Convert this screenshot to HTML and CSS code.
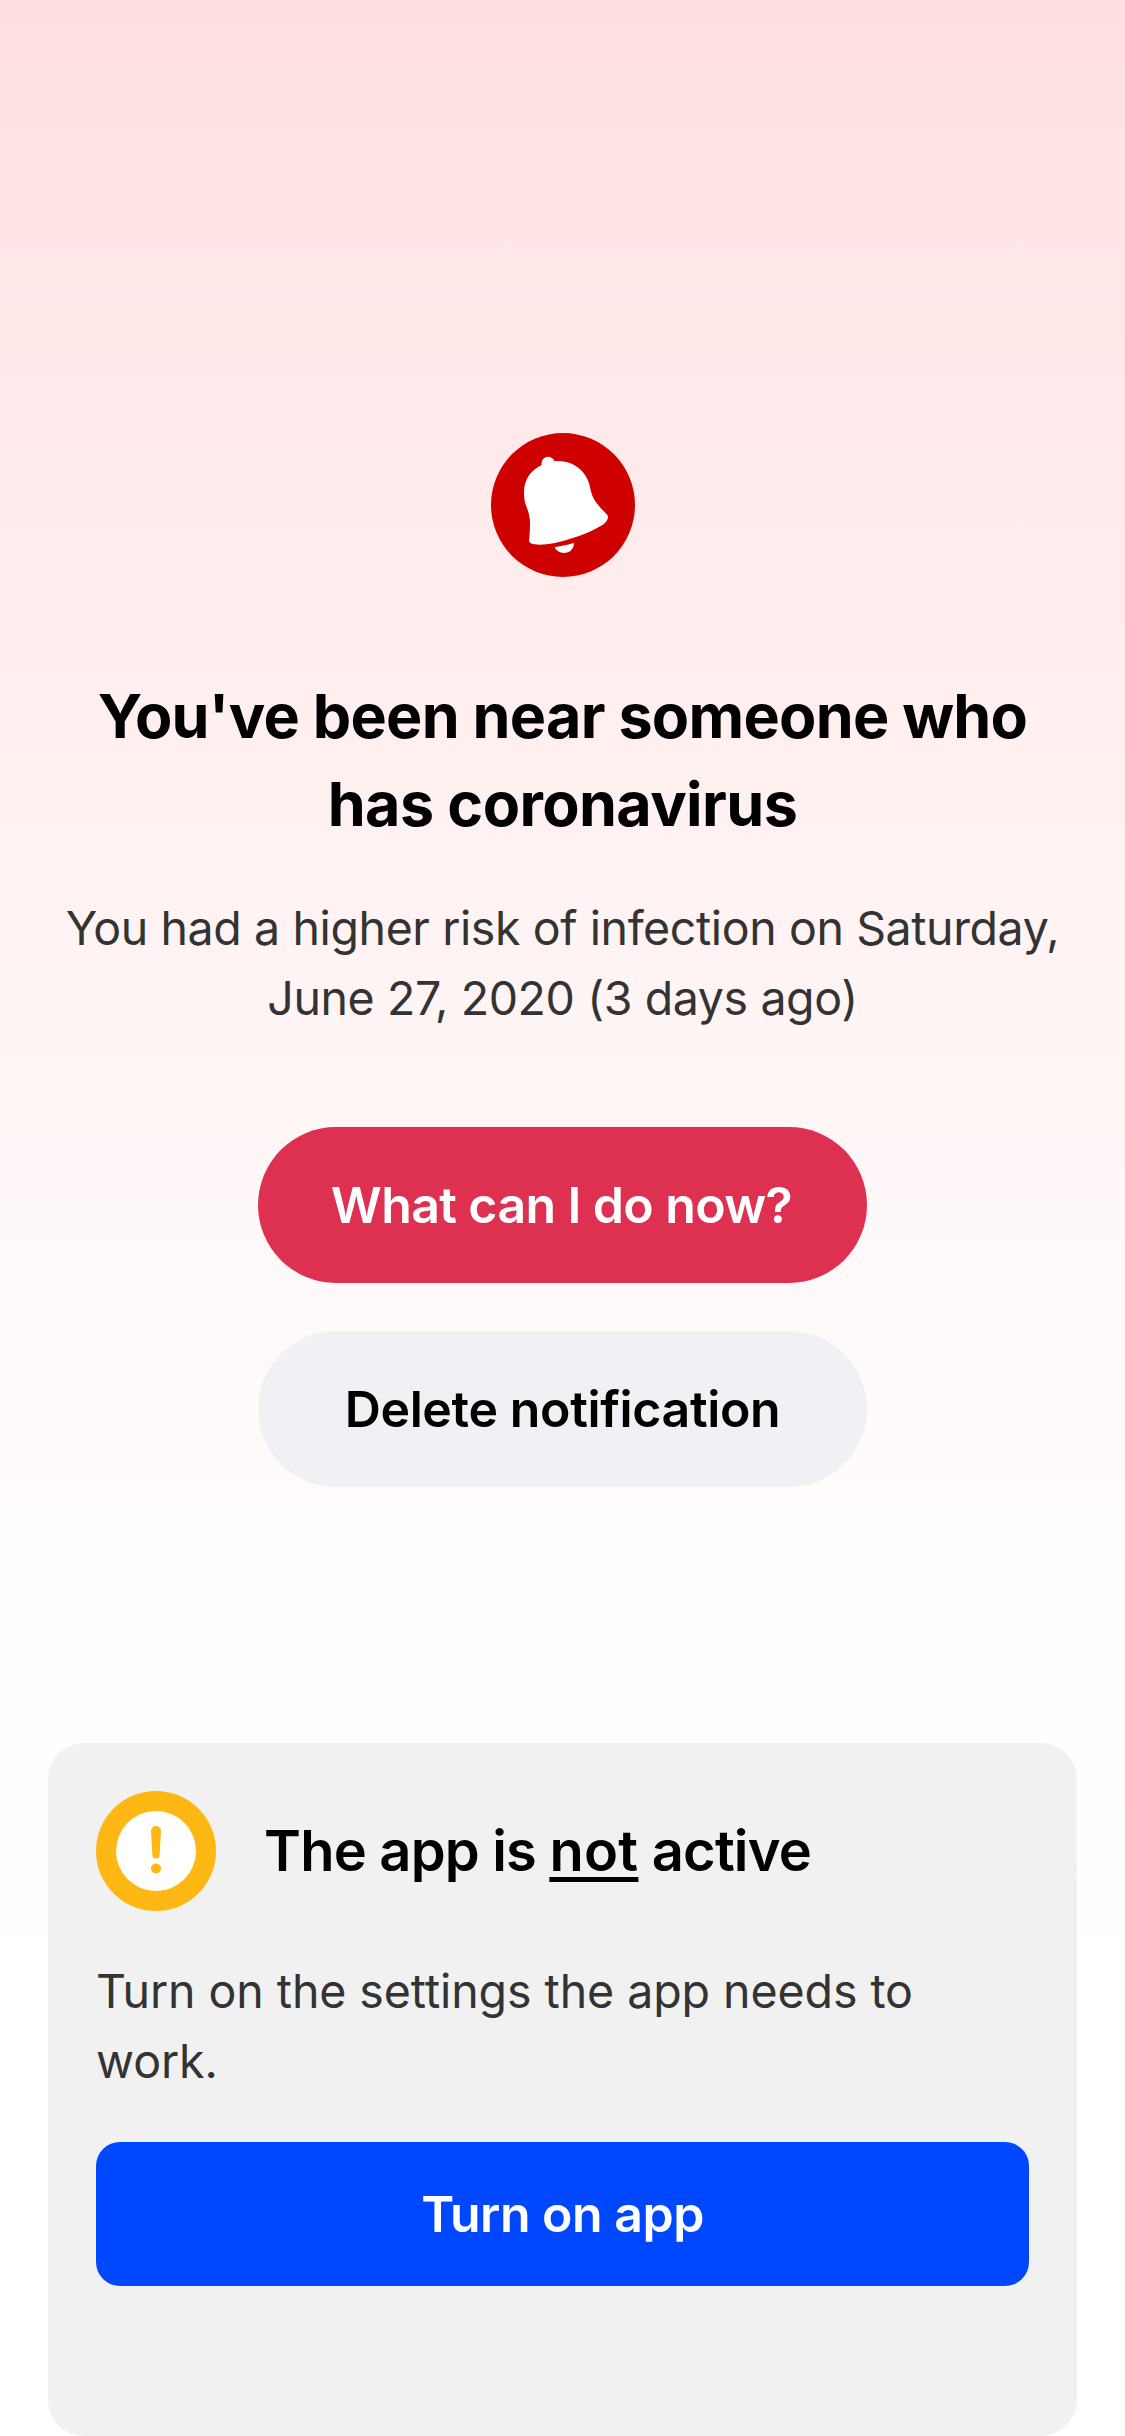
FILE: index.html
```html
<!DOCTYPE html>
<html lang="en">
<head>
<meta charset="utf-8">
<title>Exposure notification</title>
<link rel="stylesheet" href="styles.css">
</head>
<body>
<main class="screen">
  <section class="alert">
    <svg class="bell" viewBox="33 39 432 432" aria-hidden="true">
      <circle cx="249" cy="255" r="216" fill="#cf0000"/>
      <path fill="#fff" d="M185 135C183 121 192 110 204 110C213 110 220 115 223 123C265 120 299 138 317 168C333 193 329 216 342 237C352 255 369 271 382 285C388 295 379 307 366 316C323 342 273 358 221 370C197 374 167 377 153 370C147 366 146 361 148 354C150 329 152 304 147 284C142 260 132 252 132 218C132 178 152 151 185 135Z"/>
      <path fill="#fff" d="M224 382Q255 377 282 369C282 387 269 399 252 399C239 399 229 392 224 382Z"/>
    </svg>
    <h1 class="headline"><span class="headline-first">You've been near someone who</span> <span class="headline-last">has coronavirus</span></h1>
    <p class="details">You had a higher risk of infection on Saturday,<br>June 27, 2020 (3 days ago)</p>
    <div class="actions">
      <button class="pill pill-primary">What can I do now?</button>
      <button class="pill pill-secondary">Delete notification</button>
    </div>
  </section>
  <section class="card">
    <header class="card-header">
      <svg class="warning" viewBox="0 0 120 120" aria-hidden="true">
        <circle cx="60" cy="60" r="60" fill="#ffb714"/>
        <circle cx="60" cy="60" r="40" fill="#fff"/>
        <path fill="#ffb714" d="M55 40a5 5 0 0 1 10 0L63.6 64a3.6 3.6 0 0 1-7.2 0Z"/>
        <circle cx="60" cy="77.500" r="5.100" fill="#ffb714"/>
      </svg>
      <h2 class="card-title">The app is <span class="underlined">not</span> active</h2>
    </header>
    <p class="card-text">Turn on the settings the app needs to work.</p>
    <button class="card-button">Turn on app</button>
  </section>
</main>
</body>
</html>
```
FILE: styles.css
```css
* {
  box-sizing: border-box;
  margin: 0;
}

body {
  font-family: Inter, "Liberation Sans", sans-serif;
  color: #000;
}

button {
  border: 0;
  padding: 0;
  font: 600 50px Inter, "Liberation Sans", sans-serif;
}

.screen {
  display: flex;
  flex-direction: column;
  justify-content: space-between;
  height: 2436px;
  padding: 433px 48px 0;
  background: linear-gradient(#ffe0e2 0, #ffe9ea 400px, #fff1f1 800px, #fff8f8 1200px, #fffdfd 1600px, #fff 2050px);
}

.alert {
  display: flex;
  flex-direction: column;
  align-items: center;
  text-align: center;
}

.bell {
  width: 144px;
  height: 144px;
}

.headline {
  margin-top: 95px;
  font-size: 61px;
  font-weight: 700;
  line-height: 88px;
}

.headline span {
  display: block;
}

.headline-first {
  letter-spacing: -0.75px;
}

.headline-last {
  letter-spacing: -0.6px;
}

.details {
  margin-top: 45px;
  font-size: 46.5px;
  line-height: 70px;
  letter-spacing: -0.4px;
  color: #333;
  white-space: nowrap;
}

.actions {
  display: grid;
  gap: 48px;
  width: 609px;
  margin-top: 94px;
}

.pill {
  height: 156px;
  border-radius: 78px;
}

.pill-primary {
  padding-right: 2px;
  background: #de3151;
  color: #fff;
  letter-spacing: -0.6px;
}

.pill-secondary {
  background: #f0f0f5;
  color: #000;
  letter-spacing: -0.35px;
}

.card {
  height: 693px;
  padding: 48px;
  border-radius: 36px;
  background: #f1f1f1;
}

.card-header {
  display: flex;
  align-items: center;
  gap: 48px;
}

.warning {
  width: 120px;
  height: 120px;
}

.card-title {
  font-size: 56px;
  font-weight: 600;
  line-height: 80px;
  letter-spacing: -0.8px;
}

.underlined {
  letter-spacing: 0.3px;
  text-decoration: underline;
  text-decoration-thickness: 5px;
  text-decoration-skip-ink: none;
  text-underline-offset: 6px;
}

.card-text {
  margin-top: 45px;
  font-size: 46.5px;
  line-height: 70px;
  letter-spacing: -0.07px;
  color: #333;
}

.card-button {
  width: 100%;
  height: 144px;
  margin-top: 46px;
  border-radius: 24px;
  background: #0048ff;
  color: #fff;
  letter-spacing: -0.5px;
}
```
